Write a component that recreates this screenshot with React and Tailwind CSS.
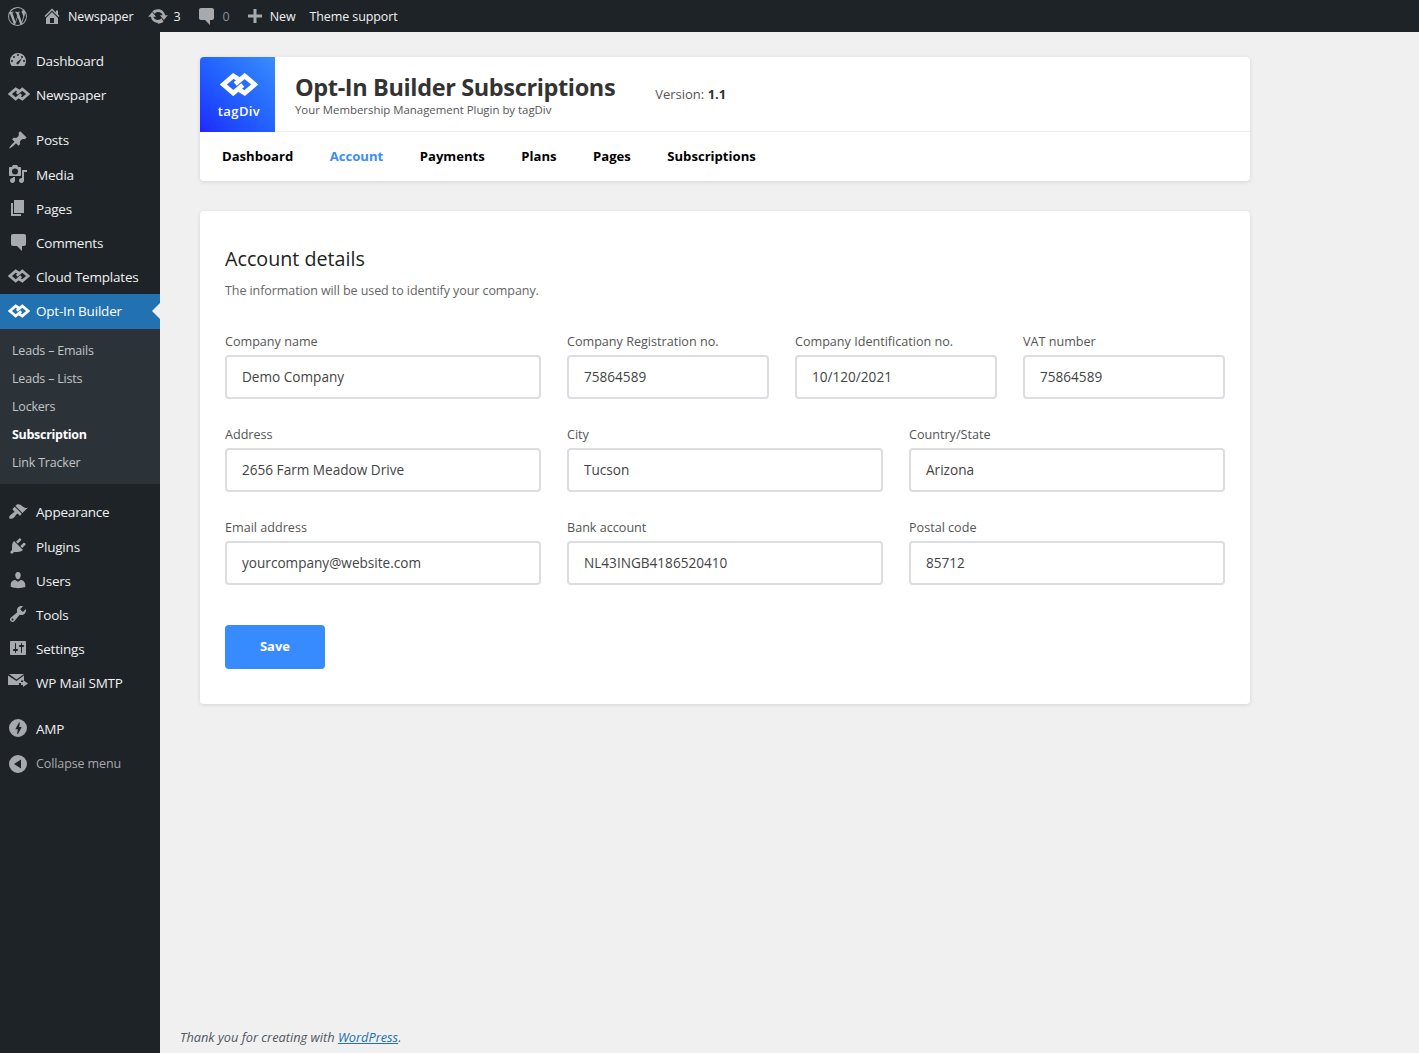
const SANS = "font-['Open_Sans','Noto_Sans',sans-serif]";

// tagDiv mark, also used for the Newspaper / Cloud Templates / Opt-In menu icons
function TagDivMark({ className }) {
  return (
    <svg viewBox="0 0 40 24" className={className} fill="none" stroke="currentColor" strokeWidth="5">
      <path d="M20.500 7 L14 3 L3.500 12 L14 21 L24 12.500" />
      <path d="M19.500 17 L26 21 L36.500 12 L26 3 L16 11.500" />
    </svg>
  );
}

function Wp({ d, className = "w-5 h-5" }) {
  return (
    <svg viewBox="0 0 20 20" className={className} fill="currentColor">
      <path d={d} fillRule="evenodd" clipRule="evenodd" />
    </svg>
  );
}

const ICONS = {
  dashboard:
    "M3.76 16h12.48A7.97 7.97 0 0 0 18 11a8 8 0 1 0-16 0c0 1.9.66 3.64 1.76 5zM10 4a1 1 0 1 1 0 2 1 1 0 0 1 0-2zM6 6a1 1 0 1 1 0 2 1 1 0 0 1 0-2zm8 0a1 1 0 1 1 0 2 1 1 0 0 1 0-2zM4 10a1 1 0 1 1 0 2 1 1 0 0 1 0-2zm12 0a1 1 0 1 1 0 2 1 1 0 0 1 0-2zM8.600 14a1.500 1.500 0 0 1 .6-1.900L14 8l-3 5.400a1.500 1.500 0 0 1-2.400.6z",
  posts:
    "M10.440 3.020l1.820-1.820 6.360 6.350-1.830 1.820c-1.050-.68-2.480-.57-3.410.36l-.75.75c-.92.93-1.040 2.350-.35 3.410l-1.830 1.820-2.410-2.410-2.800 2.790c-.42.42-3.380 2.710-3.800 2.290s1.860-3.390 2.280-3.810l2.790-2.790L4.100 9.360l1.830-1.820c1.050.69 2.480.57 3.400-.36l.75-.75c.93-.92 1.050-2.350.36-3.410z",
  media:
    "M13 11V4c0-.55-.45-1-1-1h-1.670L9 1H5L3.670 3H2c-.55 0-1 .45-1 1v7c0 .55.45 1 1 1h10c.55 0 1-.45 1-1zM7 4.500a3 3 0 1 1 0 6 3 3 0 0 1 0-6zM14 6h5v2h-3v8.500c0 1.380-1.120 2.500-2.500 2.500S11 17.880 11 16.500s1.120-2.500 2.500-2.500c.17 0 .34.02.5.05V6zM5 14.050V13h2v3.500C7 17.880 5.880 19 4.500 19S2 17.880 2 16.500 3.120 14 4.500 14c.17 0 .34.02.5.05z",
  pages: "M6 15V2h10v13H6zm-1 1h8v2H3V5h2v11z",
  comments: "M5 2h11c1.100 0 2 .9 2 2v8c0 1.100-.9 2-2 2h-2v5l-5-5H5c-1.100 0-2-.9-2-2V4c0-1.100.9-2 2-2z",
  appearance:
    "M14.480 11.060L7.410 3.990l1.500-1.500c.5-.56 2.300-.47 3.510.32 1.210.8 1.430 1.280 2.910 2.100 1.180.64 2.450 1.260 4.450.85zm-.71.71L6.700 4.700 4.930 6.470c-.39.39-.39 1.020 0 1.410l1.060 1.060c.39.39.39 1.030 0 1.420-.6.6-1.430 1.110-2.210 1.690-.35.26-.7.53-1.010.84C1.430 13.230.78 15.800 1.530 16.550c.75.75 3.320.1 4.680-1.260.31-.31.58-.66.84-1.010.58-.78 1.090-1.610 1.690-2.210.39-.39 1.030-.39 1.420 0l1.060 1.060c.39.39 1.020.39 1.410 0z",
  plugins:
    "M13.110 4.360L9.870 7.600 8 5.730l3.240-3.240c.35-.34 1.050-.2 1.560.32.52.51.66 1.210.31 1.550zm-8 1.770l.91-1.120 9.010 9.010-1.190.84c-.71.71-2.630 1.160-3.820 1.160H6.140L4.900 17.260c-.59.59-1.540.59-2.120 0a1.490 1.490 0 0 1 0-2.120l1.240-1.240v-3.880c0-1.130.4-3.190 1.090-3.890zm7.260 3.970l3.240-3.240c.34-.35 1.040-.21 1.550.31.52.51.66 1.210.31 1.550l-3.240 3.250z",
  users:
    "M10 9.250c-2.270 0-2.730-3.440-2.730-3.440C7 4.020 7.820 2 9.970 2c2.160 0 2.980 2.020 2.710 3.810 0 0-.41 3.440-2.680 3.440zm0 2.570L12.720 10c2.390 0 4.520 2.330 4.520 4.530v2.490s-3.650 1.130-7.240 1.130c-3.650 0-7.240-1.130-7.240-1.130v-2.490c0-2.250 1.940-4.480 4.470-4.480z",
  tools:
    "M16.680 9.770c-1.340 1.340-3.300 1.670-4.950.99l-5.410 6.520c-.99.99-2.590.99-3.580 0s-.99-2.590 0-3.570l6.520-5.420c-.68-1.650-.35-3.610.99-4.950 1.280-1.280 3.120-1.620 4.720-1.060l-2.890 2.890 2.820 2.820 2.860-2.870c.53 1.580.18 3.390-1.080 4.650zM3.810 16.210c.4.39 1.040.39 1.430 0 .4-.4.4-1.040 0-1.430-.39-.4-1.030-.4-1.430 0-.39.39-.39 1.030 0 1.430z",
  settings:
    "M18 16V4c0-.55-.45-1-1-1H3c-.55 0-1 .45-1 1v12c0 .55.45 1 1 1h14c.55 0 1-.45 1-1zM8 11h1c.55 0 1 .45 1 1s-.45 1-1 1H8v1.500c0 .28-.22.5-.5.5s-.5-.22-.5-.5V13H6c-.55 0-1-.45-1-1s.45-1 1-1h1V5.500c0-.28.22-.5.5-.5s.5.22.5.5V11zm5-2h-1c-.55 0-1-.45-1-1s.45-1 1-1h1V5.500c0-.28.22-.5.5-.5s.5.22.5.5V7h1c.55 0 1 .45 1 1s-.45 1-1 1h-1v5.500c0 .28-.22.5-.5.5s-.5-.22-.5-.5V9z",
  mail: "M1 2h15L8.500 7.500 1 2zM0 3.500V13h11v-2h2V8.500h3V3.500L8.500 9 0 3.500zM13 10h2V8l5 3.500-5 3.500v-2h-2z",
  amp: "M10 1a9 9 0 1 0 0 18 9 9 0 0 0 0-18zm-.9 15 .7-4.700H7.300L11 4.500h.9l-.7 4.600h2.500L10 16z",
  collapse: "M10 1a9 9 0 1 1 0 18 9 9 0 0 1 0-18zm3 4.500L6 10l7 4.500v-9z",
};

const TOP_ITEMS = [
  { label: "Dashboard", icon: "dashboard" },
  { label: "Newspaper", mark: true },
];
const MID_ITEMS = [
  { label: "Posts", icon: "posts", tall: true },
  { label: "Media", icon: "media" },
  { label: "Pages", icon: "pages" },
  { label: "Comments", icon: "comments" },
  { label: "Cloud Templates", mark: true },
];
const SUB_ITEMS = ["Leads – Emails", "Leads – Lists", "Lockers", "Subscription", "Link Tracker"];
const LOW_ITEMS = [
  { label: "Appearance", icon: "appearance", tall: true },
  { label: "Plugins", icon: "plugins" },
  { label: "Users", icon: "users" },
  { label: "Tools", icon: "tools" },
  { label: "Settings", icon: "settings" },
  { label: "WP Mail SMTP", icon: "mail" },
];

function MenuItem({ item }) {
  return (
    <div
      className={
        "flex items-center text-[13.5px] tracking-[-0.2px] text-[#f0f0f1] " + (item.tall ? "h-[35px]" : "h-[34px]")
      }
    >
      <span className={"w-9 flex justify-center text-[#a7aaad] shrink-0 " + (item.mark ? "pl-[2px]" : "")}>
        {item.mark ? <TagDivMark className="w-[22px] h-[14px]" /> : <Wp d={ICONS[item.icon]} />}
      </span>
      <span className="pt-[2px]">{item.label}</span>
    </div>
  );
}

function Sidebar() {
  return (
    <aside className="w-40 shrink-0 bg-[#1d2327] pt-[11px]">
      {TOP_ITEMS.map((it) => (
        <MenuItem key={it.label} item={it} />
      ))}
      <div className="h-[11px]" />
      {MID_ITEMS.map((it) => (
        <MenuItem key={it.label} item={it} />
      ))}
      <div className="relative mt-px flex items-center h-[35px] pb-[2px] bg-[#2271b1] text-[13.5px] tracking-[-0.2px] text-white">
        <span className="w-9 flex justify-center shrink-0 pl-[2px]">
          <TagDivMark className="w-[22px] h-[14px]" />
        </span>
        <span className="pt-[2px]">Opt-In Builder</span>
        <span className="absolute right-0 top-[9px] border-y-[8px] border-r-[8px] border-y-transparent border-r-[#f0f0f1]" />
      </div>
      <div className="bg-[#2c3338] pt-[8px] pb-[7px] mb-[10px]">
        {SUB_ITEMS.map((s) => (
          <div
            key={s}
            className={
              "h-7 pl-3 flex items-center text-[12.5px] " +
              (s === "Subscription" ? "text-white font-bold tracking-[-0.3px]" : "text-[#c3c4c7] tracking-[-0.2px]")
            }
          >
            {s}
          </div>
        ))}
      </div>
      {LOW_ITEMS.map((it) => (
        <MenuItem key={it.label} item={it} />
      ))}
      <div className="h-3" />
      <MenuItem item={{ label: "AMP", icon: "amp" }} />
      <div className="mt-[2px] flex items-center h-[34px] text-[12.5px] tracking-[-0.1px] text-[#a7aaad]">
        <span className="w-9 flex justify-center shrink-0">
          <Wp d={ICONS.collapse} />
        </span>
        Collapse menu
      </div>
    </aside>
  );
}

function TopBar() {
  return (
    <header className="h-8 bg-[#1d2327] flex items-center text-[12.5px] tracking-[-0.1px] text-[#f0f0f1] shrink-0">
      <svg viewBox="0 0 20 20" className="w-[21px] h-[21px] ml-[7px] text-[#a7aaad]" fill="currentColor">
        <path d="M10 1a9 9 0 1 0 0 18 9 9 0 0 0 0-18zM2 10c0-1.100.24-2.200.66-3.200l3.800 10.400A8 8 0 0 1 2 10zm8 8c-.78 0-1.530-.11-2.250-.32l2.400-6.970 2.460 6.740.06.11A8 8 0 0 1 10 18zm1.100-11.750c.48-.03.92-.08.92-.08.43-.05.38-.68-.05-.66 0 0-1.300.1-2.130.1-.79 0-2.100-.1-2.100-.1-.44-.02-.49.64-.05.66 0 0 .41.05.84.08l1.250 3.430-1.760 5.270-2.920-8.700c.48-.03.92-.08.92-.08.43-.05.38-.68-.05-.66 0 0-1.300.1-2.130.1l-.52-.01A8 8 0 0 1 15.400 4.100l-.1-.01c-.79 0-1.350.69-1.350 1.430 0 .66.38 1.220.79 1.880.31.540.66 1.240.66 2.250 0 .7-.27 1.510-.62 2.640l-.82 2.730-2.860-8.770zm2.930 10.700 2.440-7.060c.46-1.140.61-2.050.61-2.860 0-.29-.02-.57-.05-.82A8 8 0 0 1 14.030 16.950z" />
      </svg>
      <span className="ml-[14px] text-[#a7aaad]">
        <Wp d="M16 8.500l1.530 1.530-1.060 1.060L10 4.620l-6.470 6.470-1.060-1.060L10 2.500l4 4v-2h2v4zm-6-2.460l6 5.990V18H4v-5.970zM12 17v-5H8v5h4z" />
      </span>
      <span className="ml-[6px] pt-[2px]">Newspaper</span>
      <span className="ml-[14px] text-[#a7aaad]">
        <Wp d="M10.200 3.280c3.530 0 6.430 2.610 6.850 6.060h2.730l-3.900 4.660-4.040-4.660h2.720c-.4-1.850-2.110-3.300-4.360-3.300-1.450 0-2.730.65-3.520 1.680L4.400 5.400c1.320-1.310 3.470-2.120 5.800-2.120zM9.800 16.720c-3.530 0-6.430-2.610-6.850-6.060H.220L4.120 6l4.040 4.660H5.440c.4 1.850 2.110 3.300 4.360 3.300 1.450 0 2.730-.65 3.520-1.680l2.280 3.320c-1.320 1.310-3.470 2.120-5.800 2.120z" />
      </span>
      <span className="ml-[6px] pt-[2px]">3</span>
      <span className="ml-[15px] text-[#a7aaad]">
        <Wp d={ICONS.comments} />
      </span>
      <span className="ml-[7px] pt-[2px] text-[#8c8f94]">0</span>
      <span className="ml-[15px] text-[#a7aaad]">
        <Wp d="M17 8.500v3h-5.500V17h-3v-5.500H3v-3h5.500V3h3v5.500z" />
      </span>
      <span className="ml-[5px] pt-[2px]">New</span>
      <span className="ml-[14px] pt-[2px]">Theme support</span>
    </header>
  );
}

function Field({ label, value }) {
  return (
    <label className="flex flex-col min-w-0">
      <span className="pt-px mb-[4px] text-[12.6px] leading-[18px] text-[#555]">{label}</span>
      <input
        readOnly
        value={value}
        className="h-11 w-full rounded-[4px] border-2 border-[#dcdde1] bg-white px-[15px] pb-[2px] text-[13.6px] text-[#444] outline-none"
      />
    </label>
  );
}

const NAV = ["Dashboard", "Account", "Payments", "Plans", "Pages", "Subscriptions"];

function Header() {
  return (
    <section className="bg-white rounded-[4px] shadow-[0_1px_4px_rgba(0,0,0,0.12)] overflow-hidden">
      <div className="flex items-center h-[75px] border-b border-[#eeeeee]">
        <div className="w-[75px] h-[75px] shrink-0 bg-linear-to-tr from-[#2222ff] to-[#3b8bff] flex flex-col items-center pt-[16px] pl-[3px] text-white">
          <TagDivMark className="w-[38px] h-[23px]" />
          <span className="mt-[7px] text-[13px] leading-[16px] font-semibold tracking-[0.4px]">tagDiv</span>
        </div>
        <div className="ml-5">
          <h1 className="text-[23.5px] leading-[30px] font-bold tracking-[-0.37px] text-[#333]">
            Opt-In Builder Subscriptions
          </h1>
          <p className="text-[11.4px] leading-[15px] text-[#555]">Your Membership Management Plugin by tagDiv</p>
        </div>
        <div className="ml-10 pt-[2px] text-[13px] text-[#555]">
          Version: <b className="font-bold text-[#333]">1.1</b>
        </div>
      </div>
      <nav className="flex h-[49px] items-center pl-[22px] gap-[36.5px] text-[13.1px] font-bold text-black">
        {NAV.map((n) => (
          <span key={n} className={n === "Account" ? "text-[#3a8cff]" : ""}>
            {n}
          </span>
        ))}
      </nav>
    </section>
  );
}

function AccountForm() {
  return (
    <section className="mt-[30px] bg-white rounded-[4px] shadow-[0_1px_4px_rgba(0,0,0,0.12)] px-[25px] pt-[34px] pb-[35px]">
      <h2 className="text-[19.7px] leading-[27px] font-medium text-[#222]">Account details</h2>
      <p className="mt-[10px] text-[12.5px] leading-[18px] tracking-[-0.07px] text-[#666]">
        The information will be used to identify your company.
      </p>
      <div className="mt-[32px] grid grid-cols-[316px_202px_202px_202px] gap-x-[26px]">
        <Field label="Company name" value="Demo Company" />
        <Field label="Company Registration no." value="75864589" />
        <Field label="Company Identification no." value="10/120/2021" />
        <Field label="VAT number" value="75864589" />
      </div>
      <div className="mt-[26px] grid grid-cols-3 gap-x-[26px]">
        <Field label="Address" value="2656 Farm Meadow Drive" />
        <Field label="City" value="Tucson" />
        <Field label="Country/State" value="Arizona" />
      </div>
      <div className="mt-[26px] grid grid-cols-3 gap-x-[26px]">
        <Field label="Email address" value="yourcompany@website.com" />
        <Field label="Bank account" value="NL43INGB4186520410" />
        <Field label="Postal code" value="85712" />
      </div>
      <button className="mt-10 w-[100px] h-11 pb-px rounded-[4px] bg-[#388bff] text-white text-[13px] font-bold">
        Save
      </button>
    </section>
  );
}

export default function App() {
  return (
    <div className={"min-h-[1053px] flex flex-col bg-[#f0f0f1] " + SANS}>
      <TopBar />
      <div className="flex flex-1">
        <Sidebar />
        <main className="flex-1 flex flex-col pl-5">
          <div className="ml-5 w-[1050px] pt-[25px]">
            <Header />
            <AccountForm />
          </div>
          <footer className="mt-auto pb-[6px] text-[12.8px] italic text-[#50575e]">
            Thank you for creating with <a className="text-[#2271b1] underline">WordPress</a>.
          </footer>
        </main>
      </div>
    </div>
  );
}
